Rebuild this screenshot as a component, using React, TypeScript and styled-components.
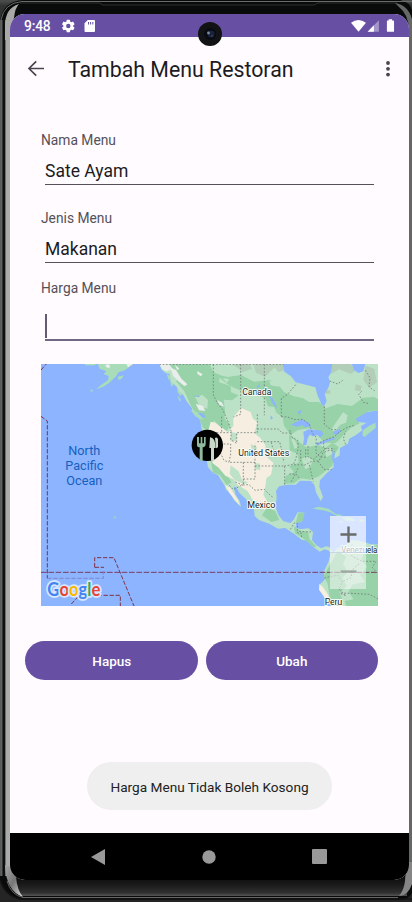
import React from "react";
import styled, { createGlobalStyle } from "styled-components";

const Global = createGlobalStyle`
  * { box-sizing: border-box; }
  body { margin: 0; background: #29292a; font-family: Roboto, "Liberation Sans", sans-serif; }
  button, input { font: inherit; border: 0; padding: 0; margin: 0; }
`;

const Device = styled.div`
  position: relative;
  width: 412px;
  height: 902px;
  overflow: hidden;
  background: linear-gradient(#4a4c4b 0 1px, #303231 6px, #303032 90%, #242425);
`;

const FrameArt = styled.svg`
  position: absolute;
  inset: 0;
`;

const Screen = styled.div`
  position: relative;
  display: flex;
  flex-direction: column;
  width: 399px;
  height: 866px;
  margin: 14px 0 0 10px;
  overflow: hidden;
  border-radius: 15px;
  background: #fffbfe;
`;

const Phone = styled.div`
  display: flow-root;
  height: 902px;
`;

const StatusBar = styled.header`
  display: flex;
  align-items: center;
  height: 23px;
  flex: none;
  padding: 1px 13px 0 14px;
  background: #6750a4;
  color: #fff;
`;

const Clock = styled.span`
  width: 37px;
  font-size: 13.8px;
  font-weight: 500;
  letter-spacing: -0.15px;
  line-height: 20px;
`;

const Spacer = styled.div`
  flex: 1;
`;

const AppBar = styled.div`
  display: flex;
  align-items: center;
  height: 64px;
  flex: none;
  padding: 0 11px 0 14px;
  color: #1c1b1f;
`;

const Title = styled.h1`
  flex: 1;
  margin: 1px 0 0 20px;
  font-size: 21.3px;
  font-weight: 400;
  line-height: 28px;
`;

const IconButton = styled.button<{ $w: number }>`
  display: flex;
  justify-content: center;
  width: ${(p) => p.$w}px;
  background: none;
`;

const Form = styled.form`
  display: flex;
  flex-direction: column;
  padding: 29px 31px 0;
  flex: none;
`;

const Field = styled.label<{ $height: number }>`
  display: flex;
  flex-direction: column;
  height: ${(p) => p.$height}px;
`;

const FieldName = styled.span`
  font-size: 13.8px;
  line-height: 20px;
  color: #535058;
`;

const FieldValue = styled.span`
  display: block;
  width: 329px;
  height: 35px;
  margin-left: 4px;
  padding-top: 9px;
  border-bottom: 1px solid #55515a;
  font-size: 17.5px;
  line-height: 24px;
  color: #1c1b1f;
`;

const FocusedValue = styled.span`
  display: flex;
  align-items: center;
  width: 329px;
  height: 43px;
  margin-left: 4px;
  padding-top: 14px;
  border-bottom: 2px solid #706784;
`;

const Caret = styled.i`
  width: 2px;
  height: 24px;
  background: #625b71;
`;

const MapBox = styled.div`
  position: relative;
  width: 337px;
  height: 242px;
  overflow: hidden;
  background: #8cb4ff;
  svg { display: block; }
`;

const ZoomPanel = styled.div`
  position: absolute;
  top: 152px;
  right: 12px;
  display: flex;
  flex-direction: column;
  width: 36px;
  height: 73px;
`;

const ZoomButton = styled.button<{ $faded?: boolean }>`
  display: flex;
  align-items: center;
  justify-content: center;
  flex: 1;
  background: ${(p) => (p.$faded ? "rgba(248,250,249,.55)" : "rgba(248,250,255,.72)")};
  border-bottom: ${(p) => (p.$faded ? "0" : "1px solid rgba(190,205,220,.7)")};
  color: ${(p) => (p.$faded ? "#9ca9a2" : "#686b6b")};
`;

const Actions = styled.div`
  display: grid;
  grid-template-columns: 173px 172px;
  gap: 7.5px;
  margin: 35px 0 0 15.3px;
`;

const Action = styled.button`
  height: 39px;
  border-radius: 20px;
  background: #6750a4;
  color: #fff;
  font-size: 13.5px;
  font-weight: 500;
`;

const Toast = styled.div`
  position: absolute;
  left: 77px;
  top: 748px;
  display: flex;
  align-items: center;
  justify-content: center;
  width: 245px;
  height: 48px;
  border-radius: 24px;
  background: #efefef;
  color: #222;
  font-size: 13.65px;
  padding-top: 1px;
  white-space: nowrap;
`;

const NavBar = styled.nav`
  display: flex;
  align-items: center;
  justify-content: space-between;
  height: 47px;
  flex: none;
  padding: 0 82px 0 80px;
  background: #000;
`;

const Camera = styled.svg`
  position: absolute;
  left: 198px;
  top: 22px;
`;

const Frame = () => (
  <FrameArt width="412" height="902" viewBox="0 0 412 902">
    <defs>
      <linearGradient id="left">
        <stop offset="0" stopColor="#424443" /><stop offset=".1" stopColor="#6d6f6e" />
        <stop offset=".22" stopColor="#4a4c4b" /><stop offset=".3" stopColor="#090b0a" />
        <stop offset=".46" stopColor="#101211" /><stop offset=".56" stopColor="#777" />
        <stop offset=".64" stopColor="#a8a8a7" /><stop offset="1" stopColor="#adadab" />
      </linearGradient>
      <linearGradient id="chin" x2="0" y2="1">
        <stop offset="0" stopColor="#0b0b0b" /><stop offset=".45" stopColor="#191919" />
        <stop offset=".85" stopColor="#303030" /><stop offset="1" stopColor="#555" />
      </linearGradient>
      <linearGradient id="shine" x2="1" y2="1">
        <stop offset="0" stopColor="#a9a9a9" /><stop offset=".5" stopColor="#777" /><stop offset="1" stopColor="#ddd" />
      </linearGradient>
    </defs>
    <path d="M0 21Q3 1 23 0H400Q410 2 412 10V893Q409 899 400 900H22Q3 896 0 879Z" fill="#090b0a" />
    <path d="M1 20Q4 3 22 1.5H412" fill="none" stroke="#686b69" />
    <path d="M0 20H10V876H0Z" fill="url(#left)" />
    <path d="M5 26Q5 8 19 4Q15 8 14 18L10 27V40H5Z" fill="#a9a9a8" />
    <path d="M20 3H99L103 5H314L318 3H397" fill="none" stroke="#2d302e" />
    <path d="M395 3Q408 5 412 19V875H409V29Q408 14 399 7Z" fill="#666867" />
    <path d="M12 875H407V896H20Z" fill="url(#chin)" />
    <path d="M5 865Q6 891 23 897Q17 890 16 877L10 867Z" fill="url(#shine)" />
    <path d="M409 862V867Q405 873 405 881Q404 890 399 896Q408 896 412 884V862Z" fill="#858585" />
    <path d="M7 881Q11 895 23 897.5H398" fill="none" stroke="#656565" />
    <path d="M0 880Q5 896 20 899H412" fill="none" stroke="#151515" strokeWidth="1.5" />
  </FrameArt>
);

const mainland =
  "M370 12L377 29 389 39 400 41 405 67 421 79 429 95 442 105 452 124 468 145 470 157 480 159 493 183 497 207 503 220 502 263 511 291 516 322 531 339 546 345 555 360 565 375 570 389 583 399 594 421 615 441 611 423 599 404 593 380 600 381 611 400 630 417 642 437 654 448 656 468 670 481 700 491 726 506 748 504 774 521 798 540 818 541 831 560 851 575 866 568 879 572 883 581 878 604 863 636 866 659 850 674 858 698 876 722 891 744H1035V554L1005 553 987 547 961 541 942 541 930 554 904 565 891 579 880 561 870 559 856 565 841 556 828 540 831 516 817 505 792 508 779 502 781 488 797 485 805 458 785 457 773 479 763 489 742 484 728 466 719 442 722 411 720 393 729 379 755 374 779 374 792 362 825 363 835 374 840 397 854 423 861 411 850 380 852 361 872 340 893 322 892 298 911 286 912 264 936 251 940 236 961 224 979 211 974 199 991 189 964 185 954 181 967 168 993 156 1035 150V0H370Z";

const fork = "M483 231V255Q483 262 491 262V303H500V262Q509 261 509 252V231H504V250H499V231H494V250H489V231Z";

const Patches = () => (
  <g>
    <g fill="#97d2a8">
      <path d="M400 12H521L532 37 552 45 549 67 584 78 585 97 608 106 588 121 563 119 568 160 556 207 534 181 518 215 500 202 488 170 468 143 445 94 420 64 435 53Z" />
      <path d="M537 42L575 51 615 45 654 65 703 60 733 82 744 96 774 109 801 115 819 126 849 126 870 145 905 132 948 138 981 113 1014 111 1035 123V150L994 155 958 178 971 190 947 202 928 219 907 242 899 249 866 248 846 227 850 213 823 204 786 210 764 224 744 197 740 172 721 158 714 141 696 139 687 115 659 101 625 96 594 83 574 72Z" />
      <path d="M759 223L784 242 811 262 846 255 867 264 890 248 909 262 894 286 889 317 849 349 824 359 793 355 774 370 743 371 750 347 774 337 759 319 788 308 785 282 761 271Z" />
      <path d="M535 138L548 134 569 181 582 194 571 216 557 197 545 171ZM524 300L546 311 571 343 587 367 572 375 551 344 531 338Z" />
      <path d="M693 442L718 454 730 480 706 486 678 466ZM787 459L806 458 799 485 779 489ZM773 498L793 512 817 516 820 536 841 560 832 562 805 538 777 520Z" />
      <path d="M905 574L931 590 921 611 935 636 919 654 933 678 910 698 922 724 901 744 882 721 875 671 863 648ZM986 569L1035 550V744H933L926 723 953 718 938 696 948 674 987 665 972 646 993 620 977 599Z" />
    </g>
    <g fill="#f5eee1">
      <path d="M616 144L644 156 651 176 665 186 655 219 673 234 688 255 690 289 712 309 705 344 691 355 689 375 682 404 695 427 686 450 665 426 648 418 640 396 606 376 593 358 568 347 548 323 529 309 530 276 541 251 529 231 515 219 524 185 539 189 557 203 577 217 592 197 592 171Z" />
      <path d="M567 375L583 383 594 401 606 421 611 436 598 421 580 399ZM621 373L643 392 659 424 650 417ZM850 672L861 681 876 704 887 727 875 730 862 707 849 689Z" />
    </g>
    <g fill="#bde2c7">
      <path d="M585 216L604 220 601 242 584 244ZM584 316L608 334 619 362 636 366 626 373 597 361 581 342ZM645 252L663 262 657 280 646 269ZM657 309L672 311 673 331 656 327Z" />
      <path d="M765 235L776 239 786 261 776 267ZM797 297L815 289 831 300 823 320 808 328ZM865 270L884 262 889 281 872 292ZM921 157L935 166 930 188 913 194 898 213 885 212 892 199Z" />
      <path d="M477 110L500 105 516 120 514 146 491 139ZM956 604L979 611 968 636 948 632Z" />
      <path d="M625 92L650 97 676 118 690 142 712 160 718 190 690 184 662 160 640 150 612 135ZM700 62L722 66 728 80 704 76ZM560 54L580 58 572 68Z" />
    </g>
    <g fill="#b2ceb8">
      <path d="M586 12H641L648 27 618 36 603 22ZM652 12H744L749 29 727 37 716 22 687 50 660 38ZM888 12H945L957 33 944 42 909 28 886 42ZM989 17L1014 26 1023 67 999 83 982 61ZM867 91H883V101H865ZM959 73L977 78 974 94 957 91Z" />
    </g>
    <g fill="#e9edeb">
      <path d="M370 12L401 14 406 24 420 30 435 55 454 73 446 79 429 65 411 47 405 29 390 34 378 27ZM479 131L501 138 508 153 489 151ZM543 119L558 128 564 140 550 134ZM416 15L430 25 424 31ZM484 33L500 43 494 49 484 41Z" />
    </g>
  </g>
);

const GoogleMap = () => (
  <svg width="337" height="242" viewBox="15 12 1011 726" fontFamily="Roboto, sans-serif">
    <rect x="15" y="12" width="1011" height="726" fill="#8cb4ff" />
    <path d={mainland} fill="#bbe2c6" />
    <Patches />
    <g fill="#a9ddb9">
      <path d="M186 12H293L279 22 266 31 248 37 239 50 218 70 202 80 180 88 196 74 216 61 218 48 203 42 211 34 191 26Z" />
      <path d="M245 50L264 46 256 57 247 59ZM161 92L169 88 170 95ZM147 12H178V16H147ZM391 39L403 51 399 62ZM401 57L412 73 407 82ZM422 86L438 104 433 107 426 99ZM425 106L435 120 430 124Z" />
      <path d="M463 149L487 158 503 174 496 179 478 169ZM829 446L848 440 877 446 899 462 921 465 907 470 883 457 862 451ZM918 471L942 471 960 483 930 482ZM909 483H921V487H909ZM971 479H982V485H970ZM981 211L1000 197 1018 188 1019 204 1000 218 986 231 979 225ZM234 468L240 472 236 477Z" />
    </g>
    <path d="M271 12H290L276 22ZM207 15L219 13 223 22 214 24Z" fill="#edf0ee" />
    <g fill="#8cb4ff">
      <path d="M740 8L745 35 765 49 779 67 803 73 838 82 844 104 856 132 864 139 872 123 866 101 877 83 882 66 877 52 886 36 889 7ZM946 8L954 30 967 39 982 34 989 8Z" />
      <path d="M764 195L778 187 799 178 807 184 821 188 824 199 806 202 798 195 785 200ZM802 216L817 208 836 209 856 212 862 222 852 233 845 225 832 229 821 224 815 235 811 255 801 255 804 235ZM837 251L861 243 894 231 896 238 870 247 846 256ZM892 216L909 207 916 213 904 224 893 222ZM697 105L709 115 718 129 724 145 711 133ZM660 82L673 72 670 82ZM784 155L797 149 791 166ZM704 166L711 174 704 180ZM890 269L897 282 893 311 888 296Z" />
      <path d="M472 107L493 108 488 112ZM485 158L503 161 509 174 498 172Z" />
    </g>
    <g fill="none" stroke="#747d7b" strokeWidth="2.5" strokeDasharray="5 5">
      <path d="M370 13H743M532 13V105L545 130 560 149 577 187 586 216M614 13V163L592 171M685 13V166M664 207H727L738 219H765M557 170V215M532 218H586L584 239 602 250V218H664V163M664 245H731L739 278M553 252H584V282L579 307H657V251M622 307V376L598 366M657 307V357H622M657 318H746V375M745 318L768 314 807 315 827 304 849 303 861 278 882 270 896 274" />
      <path d="M736 170L755 171 777 179 801 178 820 194 831 223 841 232 840 253 870 239 895 230 911 215 936 201 956 196M736 170V115L755 103 782 70M865 139V193L885 209 903 209M761 210L768 231 786 242V267L779 298 771 316M816 258V291L834 298 854 277 872 266M840 258V279L852 291 873 292M786 325L777 344 765 366M820 315L832 365M846 304L864 328 887 329M929 253L922 236 929 214M881 63L905 72 920 61M977 94L968 103 982 127 1000 131M988 31L1002 53 999 81 1016 92" />
      <path d="M580 376L592 389 618 375 639 374 657 391 685 388 704 407 713 413M763 508L775 489 785 490 784 518 797 520 796 532M790 514L828 516M949 553L936 575 950 590 980 604 1018 604M865 654L885 649 906 646 919 667 909 687 930 707 909 699M969 612L951 627 945 653 919 665M915 699L945 700 1001 703 1026 717M1020 604L1009 622 1023 639" />
      <path d="M544 260L564 301 579 307M706 247L713 276 739 284 744 307M794 270V303M809 268V299M760 342H780L793 358M863 248V266H896" />
    </g>
    <path d="M15 637H1026" fill="none" stroke="#793f63" strokeWidth="3" strokeDasharray="17 5" />
    <path d="M15 169L34 183V655M15 30L31 12M176 622V593H234M176 622H204M235 596L294 738M106 732L130 706H253V738" fill="none" stroke="#803446" strokeWidth="3" strokeDasharray="13 5" />
    <path d="M34 655H202V633" fill="none" stroke="#8385ca" strokeWidth="3" strokeDasharray="13 5" />
    <g fill="#1760bd" fontSize="41" textAnchor="middle">
      <text x="145" y="285" textLength="96" lengthAdjust="spacingAndGlyphs">North</text>
      <text x="145" y="331" textLength="114" lengthAdjust="spacingAndGlyphs">Pacific</text>
      <text x="145" y="376" textLength="108" lengthAdjust="spacingAndGlyphs">Ocean</text>
    </g>
    <g fill="#202322" stroke="#f5faf7" strokeWidth="6" strokeLinejoin="round" paintOrder="stroke" fontSize="27">
      <text x="619" y="106" textLength="87">Canada</text>
      <text x="607" y="289" textLength="153">United States</text>
      <text x="634" y="445" textLength="84">Mexico</text>
      <text x="916" y="580" textLength="108" lengthAdjust="spacingAndGlyphs">Venezuela</text>
      <text x="866" y="734" textLength="53">Peru</text>
    </g>
    <circle cx="514" cy="256" r="47" fill="#000" />
    <path d={fork} fill="#91b9a0" />
    <path d="M522 232Q538 232 539 264H534V302H525V264H520ZM537 234Q542 230 546 237V262L540 265Z" fill="#c7d7c8" />
    <text x="34" y="707" fontFamily="Lato, sans-serif" fontSize="54" fontWeight="700" textLength="159" lengthAdjust="spacingAndGlyphs" stroke="#d8e6ff" strokeWidth="11" strokeLinejoin="round" paintOrder="stroke">
      <tspan fill="#4285ef">G</tspan><tspan fill="#e84335">o</tspan><tspan fill="#f9b900">o</tspan><tspan fill="#4285ef">g</tspan><tspan fill="#34a853">l</tspan><tspan fill="#e84335">e</tspan>
    </text>
  </svg>
);

export default function App() {
  return (
    <Device>
      <Global />
      <Frame />
      <Phone>
        <Screen>
          <StatusBar>
            <Clock>9:48</Clock>
            <svg width="36" height="14" viewBox="0 0 36 14" fill="#fff">
              <path fillRule="evenodd" d="M5.8.7h3l.4 1.8 1.2.7 1.7-.6 1.5 2.6-1.4 1.2v1.2l1.4 1.2-1.5 2.5-1.7-.5-1.2.7-.4 1.8h-3l-.4-1.8-1.2-.7-1.7.5L1 8.8l1.4-1.2V6.4L1 5.2l1.5-2.6 1.7.6 1.2-.7zM7.3 4.8a2.2 2.2 0 1 0 0 4.4 2.2 2.2 0 0 0 0-4.4z" />
              <path fillRule="evenodd" d="M26.8 1H33q1 0 1 1v10q0 1-1 1h-8.5q-1 0-1-1V4.3zM27 3v2.5h1V3zm2.1 0v2.5h1V3zm2.2 0v2.5h1V3z" />
            </svg>
            <Spacer />
            <svg width="45" height="14" viewBox="0 0 46 14" fill="#fff">
              <path d="M0 3.7Q7.5-1.8 15.3 3.7L7.7 13Z" />
              <path d="M17 13L28.5 1V13Z" opacity=".4" /><path d="M17 13L23.4 6.3V13Z" />
              <path d="M38.5 0h3.5v1.4h1.2q.8 0 .8.8V12q0 1-1 1h-5.3q-1 0-1-1V2.2q0-.8.8-.8h1z" />
            </svg>
          </StatusBar>
          <AppBar>
            <IconButton $w={24} aria-label="Kembali">
              <svg width="18" height="18" viewBox="0 0 18 18" fill="none" stroke="#49454f" strokeWidth="1.7"><path d="M17 8.5H2.5M9.2 1.4L2 8.5l7.2 7.1" /></svg>
            </IconButton>
            <Title>Tambah Menu Restoran</Title>
            <IconButton $w={20} aria-label="Opsi">
              <svg width="6" height="18" viewBox="0 0 6 18" fill="#49454f"><circle cx="3" cy="3" r="1.9" /><circle cx="3" cy="8.8" r="1.9" /><circle cx="3" cy="14.6" r="1.9" /></svg>
            </IconButton>
          </AppBar>
          <Form>
            <Field $height={78}><FieldName>Nama Menu</FieldName><FieldValue>Sate Ayam</FieldValue></Field>
            <Field $height={70}><FieldName>Jenis Menu</FieldName><FieldValue>Makanan</FieldValue></Field>
            <Field $height={86}><FieldName>Harga Menu</FieldName><FocusedValue><Caret /></FocusedValue></Field>
            <MapBox>
              <GoogleMap />
              <ZoomPanel>
                <ZoomButton type="button" aria-label="Perbesar"><svg width="17" height="17" viewBox="0 0 17 17" stroke="currentColor" strokeWidth="2.3"><path d="M.5 8.5h16M8.5.5v16" /></svg></ZoomButton>
                <ZoomButton type="button" $faded aria-label="Perkecil"><svg width="17" height="17" viewBox="0 0 17 17" stroke="currentColor" strokeWidth="2.3"><path d="M.5 8.5h16" /></svg></ZoomButton>
              </ZoomPanel>
            </MapBox>
          </Form>
          <Actions><Action>Hapus</Action><Action>Ubah</Action></Actions>
          <Spacer />
          <NavBar>
            <svg width="16" height="16" viewBox="0 0 16 16" fill="#999"><path d="M1 8L15 0V16Z" /></svg>
            <svg width="14" height="14" viewBox="0 0 14 14" fill="#999"><circle cx="7" cy="7" r="6.7" /></svg>
            <svg width="15" height="15" viewBox="0 0 15 15" fill="#999"><rect width="15" height="15" rx="1" /></svg>
          </NavBar>
          <Toast>Harga Menu Tidak Boleh Kosong</Toast>
        </Screen>
      </Phone>
      <Camera width="24" height="24" viewBox="0 0 24 24">
        <circle cx="12" cy="12" r="12" fill="#111315" /><circle cx="12" cy="12" r="6" fill="#090b14" />
        <circle cx="13" cy="12" r="3.5" fill="#19213c" /><circle cx="10.5" cy="11" r="1.4" fill="#799096" /><circle cx="14" cy="14" r="1" fill="#38405c" />
      </Camera>
    </Device>
  );
}
